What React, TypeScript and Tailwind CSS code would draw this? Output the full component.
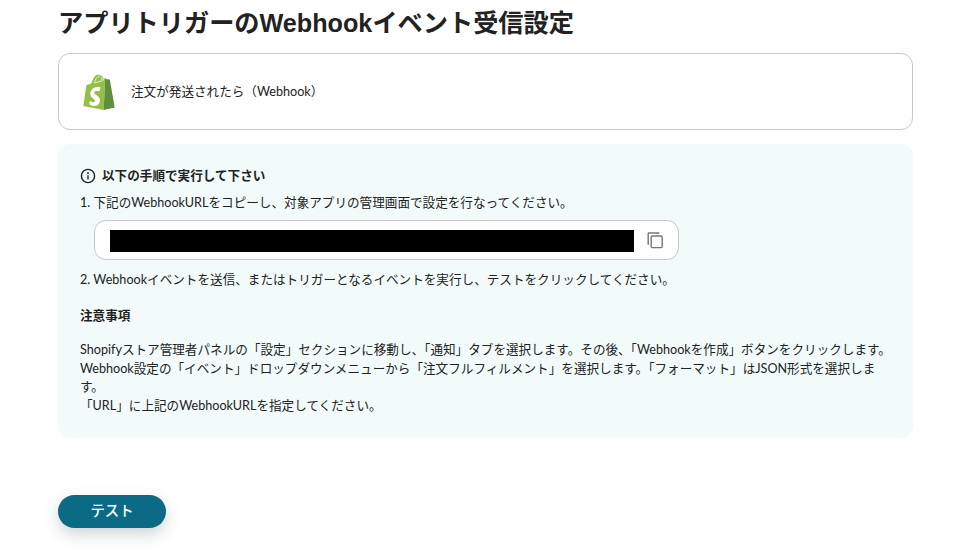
function ShopifyLogo() {
  return (
    <svg width="32" height="36" viewBox="0 0 34 38" aria-hidden="true" className="shrink-0">
      <path d="M23.5 4.6 C23 4.5 21.5 4.6 21.5 4.6 C21 3 19.8 1 17.4 1.2 C15.4 0 13 1.6 11.5 4 C10.2 6 9.4 8.2 9 9.8 L4.8 11.2 C3.6 11.6 3.5 11.6 3.4 12.8 L0.4 34 L22 38 Z" fill="#95bf47" />
      <path d="M24.2 4.6 C24 4.6 23.7 4.6 23.5 4.6 L22 38 L33.8 35.4 C33.8 35.4 28.6 6.2 28.5 6 C28.4 5.7 28.2 5.6 28 5.6 L25.2 5.4 Z" fill="#5e8e3e" />
      <path d="M12 9.2 C12.8 6 14.6 3.2 17.2 2.4 M19.2 3.4 C20 4.4 20.2 6 20.2 7.2 L12.5 9.2 M21.5 4.8 L21.8 6.8" fill="none" stroke="#f4f8ec" strokeWidth="0.9" />
      <path d="M18.6 14.2 L17.4 18.4 C17.4 18.4 16 17.8 14.4 17.9 C12 18.1 12 19.6 12 20 C12.1 22 17.6 22.5 17.9 27.3 C18.2 31.1 15.9 33.7 12.6 33.9 C8.7 34.1 6.5 31.8 6.5 31.8 L7.4 28.3 C7.4 28.3 9.5 29.9 11.2 29.8 C12.3 29.7 12.7 28.8 12.7 28.2 C12.5 25.5 8.1 25.7 7.8 21.3 C7.6 17.6 10 13.9 15.3 13.6 C17.4 13.4 18.6 14.2 18.6 14.2 Z" fill="#fff" />
    </svg>
  );
}

function InfoIcon() {
  return (
    <svg width="16" height="16" viewBox="0 0 16 16" fill="none" aria-hidden="true" className="shrink-0">
      <circle cx="8" cy="8" r="6.6" stroke="#222" strokeWidth="1.4" />
      <path d="M8 7.2 V11.4" stroke="#222" strokeWidth="1.4" />
      <circle cx="8" cy="5" r="0.9" fill="#222" />
    </svg>
  );
}

function CopyIcon() {
  return (
    <svg width="18" height="18" viewBox="0 0 18 18" fill="none" aria-hidden="true">
      <path d="M3 13 H2.2 V2.6 Q2.2 2 2.8 2 H12.6 V3" stroke="#777" strokeWidth="1.4" />
      <rect x="5.2" y="5" width="11" height="11.6" rx="1" stroke="#777" strokeWidth="1.4" />
    </svg>
  );
}

export default function App() {
  return (
    <main className="h-[550px] w-[956px] overflow-hidden bg-white font-['Lato','Noto_Sans_CJK_JP',sans-serif] text-[#222222]">
      <div className="ml-[58px] w-[855px]">
        <h1 className="flex h-[53px] items-center pb-[6px] font-['Liberation_Sans','Noto_Sans_CJK_JP',sans-serif] text-[25.2px] font-bold leading-none">
          アプリトリガーのWebhookイベント受信設定
        </h1>

        <section className="flex h-[77px] items-center gap-[16px] rounded-[12px] border border-[#c8c8c8] pl-[24px]">
          <ShopifyLogo />
          <p className="pt-[1px] text-[12.6px]">注文が発送されたら（Webhook）</p>
        </section>

        <section className="mt-[14px] h-[294px] rounded-[12px] bg-[#f2fbfa] pl-[22px] pr-[16px] pt-[23px] text-[12.6px] leading-[18.9px]">
          <div className="flex items-center gap-[6px] font-bold">
            <InfoIcon />
            <span>以下の手順で実行して下さい</span>
          </div>

          <p className="mt-[8px]">1. 下記のWebhookURLをコピーし、対象アプリの管理画面で設定を行なってください。</p>

          <div className="ml-[14px] mt-[7px] flex h-[40px] w-[585px] items-center rounded-[12px] border border-[#c8c8c8] bg-white pl-[15px]">
            <div className="mt-[3px] h-[22px] w-[524px] bg-black" />
            <div className="ml-[12px] flex">
              <CopyIcon />
            </div>
          </div>

          <p className="mt-[11px]">2. Webhookイベントを送信、またはトリガーとなるイベントを実行し、テストをクリックしてください。</p>

          <p className="mt-[17px] font-bold">注意事項</p>

          <p className="mt-[15px]">
            Shopifyストア管理者パネルの「設定」セクションに移動し、「通知」タブを選択します。その後、「Webhookを作成」ボタンをクリックします。
            <br />
            Webhook設定の「イベント」ドロップダウンメニューから「注文フルフィルメント」を選択します。「フォーマット」はJSON形式を選択します。
            <br />
            「URL」に上記のWebhookURLを指定してください。
          </p>
        </section>

        <button className="mt-[57px] h-[33px] w-[108px] rounded-full bg-[#0b6a84] pb-[1px] text-[14.4px] font-medium text-white shadow-[0_6px_16px_rgba(30,60,80,0.22)]">
          テスト
        </button>
      </div>
    </main>
  );
}
